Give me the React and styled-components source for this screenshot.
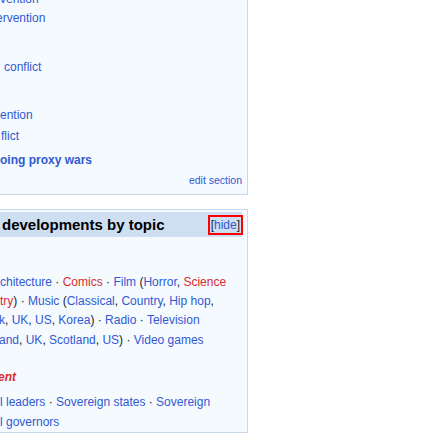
import React from 'react'
import styled, { createGlobalStyle } from 'styled-components'

const GlobalStyle = createGlobalStyle`
  html, body {
    margin: 0;
    padding: 0;
    background: #ffffff;
  }
  body {
    font-family: "Liberation Sans", Arial, sans-serif;
    color: #202122;
  }
`

const Page = styled.div`
  width: 448px;
  height: 448px;
  overflow: hidden;
`

const Column = styled.div`
  width: 268px;
  margin-left: -20px;
`

const Box = styled.div`
  background: #f5faff;
  border: 1px solid #c8d9ee;
`

const EventsBox = styled(Box)`
  margin-top: -11px;
  padding: 0 5px 7px 19px;
`

const TopicBox = styled(Box)`
  margin-top: 14px;
  padding: 2px 5px 0 2px;
`

const Line = styled.div`
  white-space: nowrap;
  font-size: 12px;
  line-height: 19.2px;
  margin-top: ${p => p.$mt || 0}px;
  margin-left: ${p => p.$shift || 0}px;
  font-weight: ${p => (p.$bold ? 'bold' : 'normal')};
  font-style: ${p => (p.$italic ? 'italic' : 'normal')};
`

const Link = styled.a`
  color: ${p => (p.$red ? '#d82c2c' : '#3159d0')};
  text-decoration: none;
`

const EditLink = styled.div`
  margin-top: 3px;
  text-align: right;
  font-size: 10.5px;
  line-height: 14px;
  color: #3159d0;
`

const Header = styled.div`
  height: 25px;
  display: flex;
  align-items: center;
  justify-content: space-between;
  background: #cedff2;
  padding-left: 17px;
`

const Title = styled.span`
  font-size: 15px;
  font-weight: bold;
  color: #000000;
  white-space: nowrap;
  margin-left: 2px;
`

const Hide = styled.span`
  font-size: 12px;
  line-height: 16px;
  padding: 0 1px;
  border: 2px solid #ff0000;
  margin-right: -1px;
  color: #202122;
`

const Body = styled.div`
  padding-left: 17px;
`

const Sep = () => <> · </>

const App = () => {
  return (
    <>
      <GlobalStyle />
      <Page>
        <Column>
          <EventsBox>
            <Line><Link>vention</Link></Line>
            <Line $shift={-4}><Link>ervention</Link></Line>
            <Line $mt={30} $shift={4}><Link>conflict</Link></Line>
            <Line $mt={28.4}><Link>ention</Link></Line>
            <Line $mt={1.3} $shift={1}><Link>flict</Link></Line>
            <Line $mt={5.3} $bold><Link>oing proxy wars</Link></Line>
            <EditLink>edit section</EditLink>
          </EventsBox>

          <TopicBox>
            <Header>
              <Title>developments by topic</Title>
              <Hide>[<Link>hide</Link>]</Hide>
            </Header>
            <Body>
              <Line $mt={35.7}>
                <Link>chitecture</Link><Sep /><Link $red>Comics</Link><Sep />
                <Link>Film</Link> (<Link>Horror</Link>, <Link $red>Science</Link>
              </Line>
              <Line>
                <Link $red>try</Link>)<Sep /><Link>Music</Link> (<Link>Classical</Link>, <Link>Country</Link>, <Link>Hip hop</Link>,
              </Line>
              <Line $shift={-1}>
                <Link>k</Link>, <Link>UK</Link>, <Link>US</Link>, <Link>Korea</Link>)<Sep /><Link>Radio</Link><Sep /><Link>Television</Link>
              </Line>
              <Line $shift={-1}>
                <Link>and</Link>, <Link>UK</Link>, <Link>Scotland</Link>, <Link>US</Link>)<Sep /><Link>Video games</Link>
              </Line>
              <Line $mt={18.7} $shift={-2} $bold $italic>
                <Link $red>ent</Link>
              </Line>
              <Line $mt={5.8}>
                <Link>l leaders</Link><Sep /><Link>Sovereign states</Link><Sep /><Link>Sovereign</Link>
              </Line>
              <Line>
                <Link>l governors</Link>
              </Line>
            </Body>
          </TopicBox>
        </Column>
      </Page>
    </>
  )
}

export default App
